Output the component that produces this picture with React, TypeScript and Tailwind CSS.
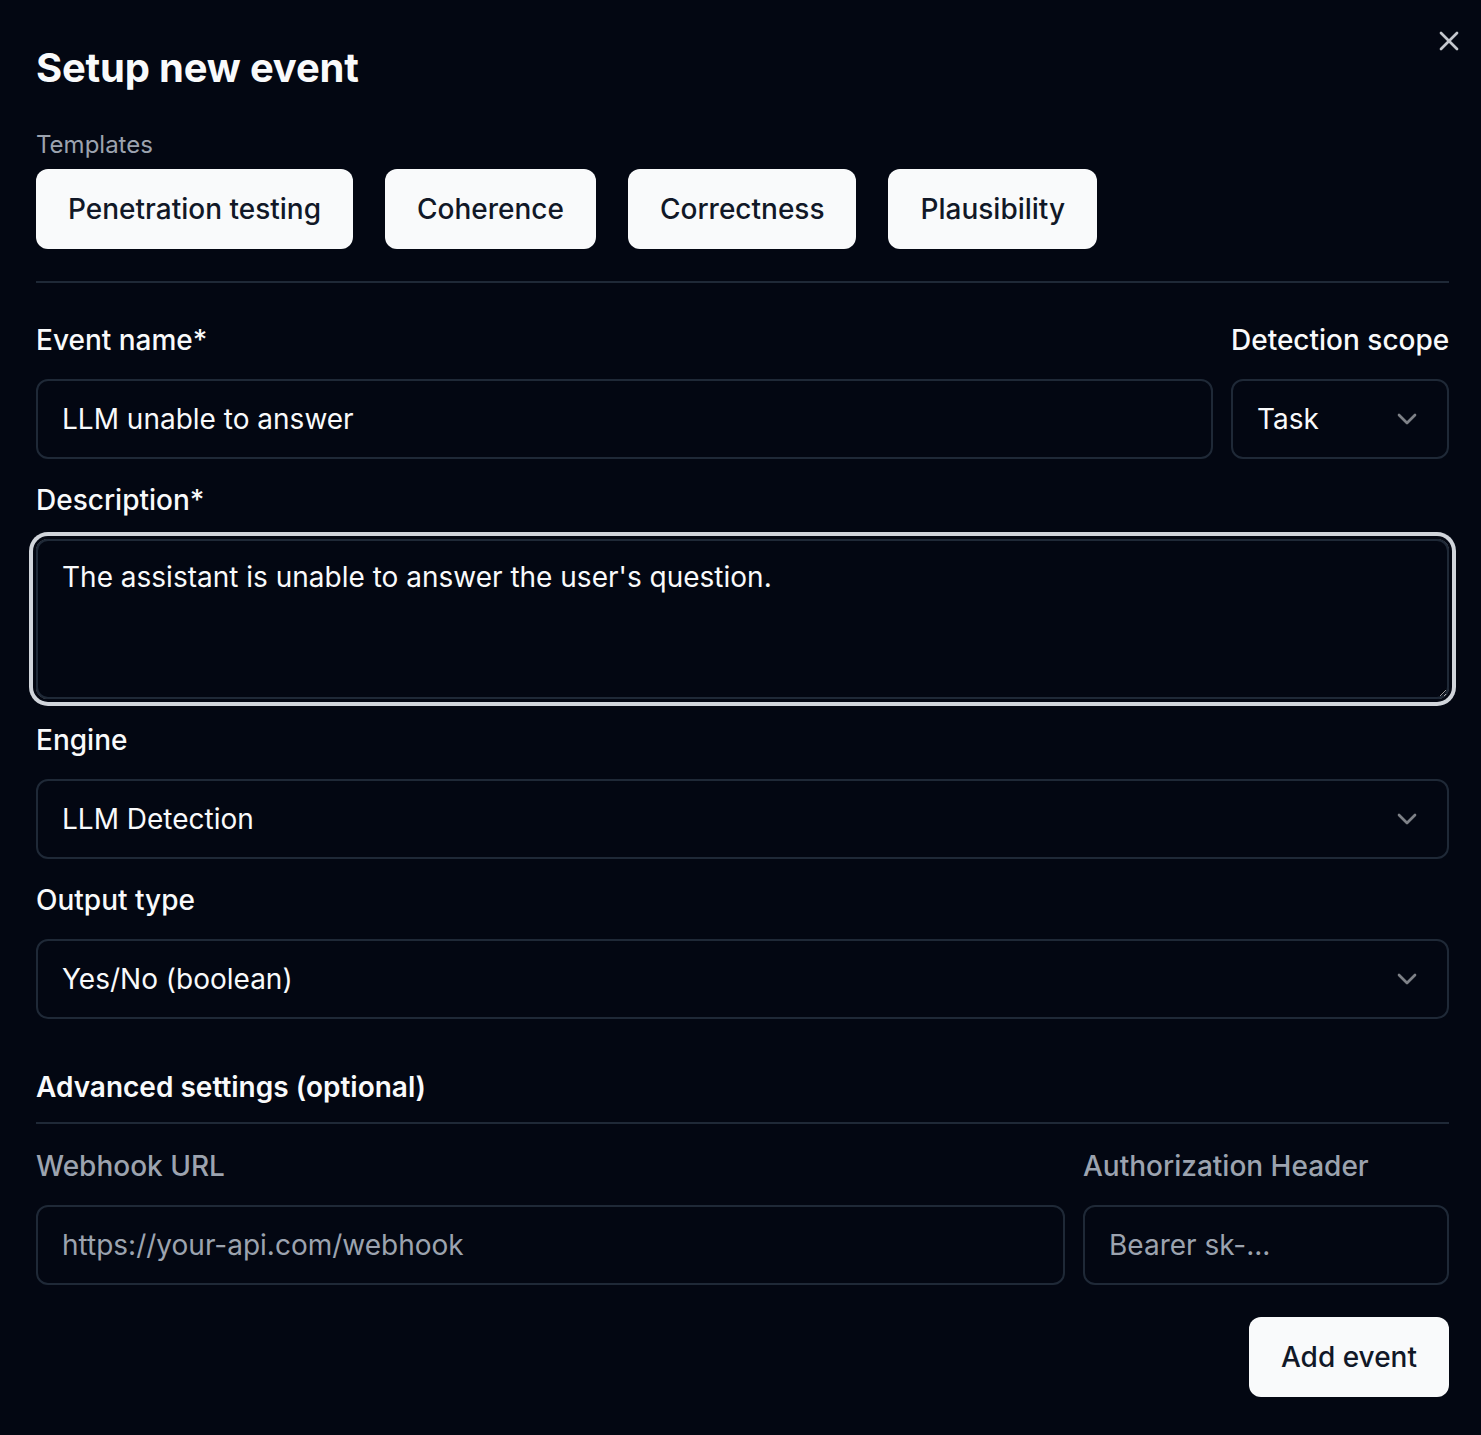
import React from "react";

const ChevronDown = () => (
  <svg width="32" height="32" viewBox="0 0 24 24" fill="none" stroke="currentColor" strokeWidth="2" strokeLinecap="round" strokeLinejoin="round" className="text-[#f9fafb] opacity-50 shrink-0">
    <path d="m6 9 6 6 6-6" />
  </svg>
);

const XIcon = () => (
  <svg width="32" height="32" viewBox="0 0 24 24" fill="none" stroke="currentColor" strokeWidth="2" strokeLinecap="round" strokeLinejoin="round">
    <path d="M18 6 6 18" />
    <path d="m6 6 12 12" />
  </svg>
);

const Label = ({ children, className = "text-[#f9fafb]" }: { children: React.ReactNode; className?: string }) => (
  <div className={`h-[40px] text-[28px] leading-[40px] font-medium ${className}`}>{children}</div>
);

const Select = ({ value }: { value: string }) => (
  <div className="mt-[19px] h-[80px] rounded-[12px] border-2 border-[#1f2937] px-[24px] flex items-center justify-between text-[28px] text-[#f9fafb]">
    <span>{value}</span>
    <ChevronDown />
  </div>
);

export default function App() {
  const templates = ["Penetration testing", "Coherence", "Correctness", "Plausibility"];
  return (
    <div className="relative min-h-[1435px] w-full bg-[#030712] text-[#f9fafb] font-['Inter',sans-serif]">
      <button className="absolute top-[25px] right-[16px] text-[#c4c7cd]" aria-label="Close">
        <XIcon />
      </button>
      <div className="pl-[36px] pr-[32px] pt-[44px] pb-[38px]">
        <h2 className="text-[40px] leading-[48px] font-bold tracking-[-0.005em]">Setup new event</h2>
        <div className="mt-[33px] h-[40px] text-[24px] leading-[40px] text-[#9ca3af]">Templates</div>
        <div className="mt-[4px] flex gap-[32px]">
          {templates.map((t) => (
            <button key={t} className="h-[80px] px-[32px] rounded-[12px] bg-[#f9fafb] text-[#111827] text-[28px] font-medium">
              {t}
            </button>
          ))}
        </div>
        <div className="mt-[32px] h-[2px] bg-[#1f2937]" />

        <div className="mt-[37px] flex gap-[18px]">
          <div className="flex-1">
            <Label>Event name*</Label>
            <div className="mt-[19px] h-[80px] rounded-[12px] border-2 border-[#1f2937] px-[24px] flex items-center text-[28px]">
              LLM unable to answer
            </div>
          </div>
          <div className="w-[218px]">
            <Label className="text-right whitespace-nowrap text-[#f9fafb]">Detection scope</Label>
            <Select value="Task" />
          </div>
        </div>

        <Label className="mt-[21px] text-[#f9fafb]">Description*</Label>
        <textarea
          className="mt-[19px] block w-full h-[160px] rounded-[12px] border-2 border-[#1f2937] bg-transparent px-[24px] py-[16px] text-[28px] leading-[40px] text-[#f9fafb] outline-none ring-4 ring-[#d1d5db] ring-offset-3 ring-offset-[#030712] resize-y font-['Inter',sans-serif]"
          defaultValue="The assistant is unable to answer the user's question."
        />

        <Label className="mt-[21px] text-[#f9fafb]">Engine</Label>
        <Select value="LLM Detection" />

        <Label className="mt-[21px] text-[#f9fafb]">Output type</Label>
        <Select value="Yes/No (boolean)" />

        <div className="mt-[48px] h-[40px] text-[28px] leading-[40px] font-semibold">Advanced settings (optional)</div>
        <div className="mt-[15px] h-[2px] bg-[#1f2937]" />

        <div className="mt-[22px] flex gap-[18px]">
          <div className="flex-1">
            <Label className="text-[#9ca3af]">Webhook URL</Label>
            <div className="mt-[19px] h-[80px] rounded-[12px] border-2 border-[#1f2937] px-[24px] flex items-center text-[28px] text-[#9ca3af]">
              https://your-api.com/webhook
            </div>
          </div>
          <div className="w-[366px]">
            <Label className="text-[#9ca3af]">Authorization Header</Label>
            <div className="mt-[19px] h-[80px] rounded-[12px] border-2 border-[#1f2937] px-[24px] flex items-center text-[28px] text-[#9ca3af]">
              Bearer sk-...
            </div>
          </div>
        </div>

        <div className="mt-[32px] flex justify-end">
          <button className="h-[80px] px-[32px] rounded-[12px] bg-[#f9fafb] text-[#111827] text-[28px] font-medium">
            Add event
          </button>
        </div>
      </div>
    </div>
  );
}
